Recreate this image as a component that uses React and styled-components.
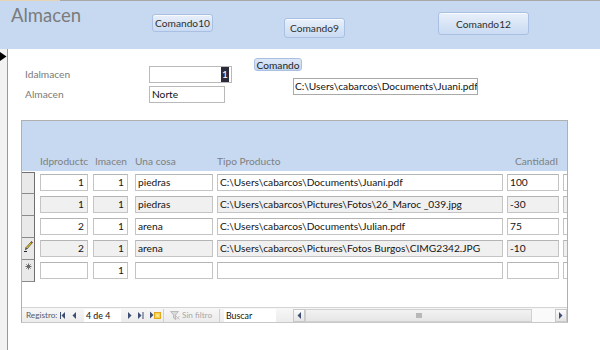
import React from "react";
import styled, { createGlobalStyle, css } from "styled-components";

const GlobalStyle = createGlobalStyle`
  html, body { margin: 0; padding: 0; background: #ffffff; }
  body { font-family: Lato, "Liberation Sans", sans-serif; }
  * { box-sizing: border-box; }
`;

const Screen = styled.div`
  width: 600px;
  height: 350px;
  overflow: hidden;
  display: flex;
  flex-direction: column;
  background: #ffffff;
  font-family: Lato, "Liberation Sans", sans-serif;
`;

const TopLine = styled.div`
  height: 1px;
  flex: none;
  background: linear-gradient(to right, #e6d3b3 0 60px, #a8a8a8 60px);
`;

const Header = styled.div`
  height: 48px;
  flex: none;
  display: flex;
  align-items: flex-start;
  background: #c6d9f1;
`;

const Title = styled.div`
  width: 141px;
  margin-left: 11px;
  margin-top: 3px;
  font-size: 18.5px;
  color: #7b7b7b;
  line-height: 22px;
`;

const CmdButton = styled.div`
  flex: none;
  width: ${(p) => p.$w}px;
  height: ${(p) => p.$h}px;
  margin-left: ${(p) => p.$ml || 0}px;
  margin-top: ${(p) => p.$mt || 0}px;
  display: flex;
  align-items: center;
  justify-content: center;
  border: 1px solid #a9c0e2;
  border-radius: 3px;
  background: linear-gradient(to bottom, #e9f0fa 0%, #d9e5f6 50%, #c9dbf3 100%);
  font-size: 10.2px;
  color: #2f2f2f;
  box-shadow: inset 0 1px 0 rgba(255, 255, 255, 0.7);
`;

const Body = styled.div`
  flex: 1;
  display: flex;
  min-height: 0;
`;

const FormSelector = styled.div`
  width: 8px;
  flex: none;
  background: #f2f2f2;
  border-right: 1px solid #9a9a9a;
  padding-top: 3px;
`;

const Detail = styled.div`
  flex: 1;
  display: flex;
  flex-direction: column;
`;

const FieldsArea = styled.div`
  height: 71px;
  flex: none;
  display: flex;
  align-items: flex-start;
`;

const LeftFields = styled.div`
  margin-left: 17px;
  margin-top: 17px;
  display: grid;
  grid-template-columns: 124px auto;
  row-gap: 3px;
  align-items: center;
`;

const FormLabel = styled.div`
  font-size: 10.2px;
  color: #7a7a7a;
  line-height: 17px;
`;

const FormBox = styled.div`
  width: ${(p) => p.$w}px;
  height: 17px;
  border: 1px solid #b9b9b9;
  background: #ffffff;
  font-size: 10.2px;
  color: #111;
  line-height: 15px;
  padding: 0 2px;
  display: flex;
  justify-content: ${(p) => (p.$right ? "flex-end" : "flex-start")};
  white-space: nowrap;
  overflow: hidden;
`;

const Selected = styled.span`
  background: #2b2b3a;
  color: #ffffff;
  padding: 0 1px;
  line-height: 14px;
`;

const RightGroup = styled.div`
  margin-left: 22px;
  margin-top: 9px;
  display: flex;
  flex-direction: column;
  align-items: flex-start;
`;

const SmallCmd = styled.div`
  height: 13px;
  width: 48px;
  border: 1px solid #a9c0e2;
  border-radius: 3px;
  background: linear-gradient(to bottom, #dde8f7, #c4d7f1);
  font-size: 10.2px;
  color: #1f1f1f;
  display: flex;
  align-items: center;
  justify-content: center;
`;

const PathBox = styled(FormBox)`
  margin-top: 7px;
  margin-left: 39px;
  border-color: #a9a9a9;
  padding: 0 1px;
`;

const Subform = styled.div`
  margin-left: 13px;
  width: 547px;
  height: 203px;
  flex: none;
  border: 1px solid #b0b0b0;
  border-bottom-color: #c8c8c8;
  display: flex;
  flex-direction: column;
  overflow: hidden;
`;

const SubHeader = styled.div`
  height: 50px;
  flex: none;
  background: #c6d9f1;
  display: flex;
  align-items: flex-end;
  padding-bottom: 3px;
`;

const SelectorSpace = styled.div`
  width: 13px;
  flex: none;
`;

const HeadLabel = styled.div`
  flex: none;
  width: ${(p) => p.$w}px;
  margin-left: ${(p) => p.$ml}px;
  font-size: 10.2px;
  color: #808080;
  line-height: 14px;
  white-space: nowrap;
  overflow: hidden;
  padding: 0 1px 0 0;
  text-align: ${(p) => (p.$right ? "right" : "left")};
`;

const Rows = styled.div`
  padding-top: 1px;
  display: flex;
  flex-direction: column;
`;

const Row = styled.div`
  height: 22px;
  display: flex;
  align-items: flex-start;
`;

const RowSelector = styled.div`
  width: 13px;
  height: 22px;
  flex: none;
  background: #e9e9e9;
  border-right: 1px solid #6f6f6f;
  border-bottom: 1px solid #8a8a8a;
  ${(p) =>
    p.$first &&
    css`
      border-top: 1px solid #6f6f6f;
    `}
  display: flex;
  align-items: flex-start;
  justify-content: center;
  padding-top: 3px;
`;

const Cell = styled.div`
  flex: none;
  width: ${(p) => p.$w}px;
  height: 17px;
  margin-top: 2px;
  margin-left: ${(p) => p.$ml}px;
  border: 1px solid #c4c4c4;
  border-top-color: #b4b4b4;
  background: ${(p) => (p.$alt ? "#f0f0f0" : "#ffffff")};
  font-size: 10.2px;
  color: #141414;
  line-height: 15px;
  padding: 0 3px 0 2px;
  white-space: nowrap;
  overflow: hidden;
  text-align: ${(p) => (p.$right ? "right" : "left")};
`;

const Spacer = styled.div`
  flex: 1;
`;

const NavBar = styled.div`
  height: 15px;
  flex: none;
  display: flex;
  align-items: center;
  background: linear-gradient(to bottom, #f7f7f7, #ececec);
  border-top: 1px solid #d4d4d4;
`;

const NavText = styled.span`
  flex: none;
  width: ${(p) => p.$w}px;
  margin-left: ${(p) => p.$ml || 0}px;
  color: ${(p) => (p.$dim ? "#a8a8a8" : "#555a66")};
  white-space: nowrap;
  font-size: 8.2px;
  line-height: 13px;
`;

const NavIcon = styled.svg`
  flex: none;
  margin-left: ${(p) => p.$ml || 0}px;
  display: block;
`;

const NavInput = styled.div`
  flex: none;
  width: ${(p) => p.$w}px;
  height: 13px;
  margin-left: ${(p) => p.$ml || 0}px;
  background: #ffffff;
  font-size: 8.8px;
  line-height: 13px;
  color: #111;
  padding-left: 2px;
  white-space: nowrap;
`;

const NavSep = styled.div`
  flex: none;
  width: 1px;
  height: 13px;
  margin-left: ${(p) => p.$ml || 0}px;
  background: #d0d0d0;
`;

const ScrollBtn = styled.div`
  flex: none;
  width: ${(p) => p.$w}px;
  height: 13px;
  margin-left: ${(p) => p.$ml || 0}px;
  border: 1px solid #c9c9c9;
  background: linear-gradient(to bottom, #fbfbfb, #e4e4e4);
  display: flex;
  align-items: center;
  justify-content: center;
`;

const Track = styled.div`
  flex: 1;
  height: 13px;
  border: 1px solid #d0d0d0;
  background: linear-gradient(to bottom, #f2f2f2, #e6e6e6);
  display: flex;
  align-items: center;
  justify-content: center;
`;

const Thumb = styled.div`
  width: 6px;
  height: 5px;
  background: #b8b8b8;
`;

const WhiteGap = styled.div`
  flex: none;
  width: 23px;
  height: 13px;
  background: #fafafa;
`;

const columns = [
  { key: "id", label: "Idproductc", w: 48, ml: 5, right: true },
  { key: "alm", label: "lmacen", w: 35, ml: 5, right: true, headRight: true },
  { key: "cosa", label: "Una cosa", w: 78, ml: 7 },
  { key: "tipo", label: "Tipo Producto", w: 286, ml: 4 },
  { key: "cant", label: "CantidadI", w: 52, ml: 4, headRight: true },
  { key: "x", label: "", w: 20, ml: 4 },
];

const data = [
  { id: "1", alm: "1", cosa: "piedras", tipo: "C:\\Users\\cabarcos\\Documents\\Juani.pdf", cant: "100", x: "" },
  { id: "1", alm: "1", cosa: "piedras", tipo: "C:\\Users\\cabarcos\\Pictures\\Fotos\\26_Maroc _039.jpg", cant: "-30", x: "" },
  { id: "2", alm: "1", cosa: "arena", tipo: "C:\\Users\\cabarcos\\Documents\\Julian.pdf", cant: "75", x: "" },
  { id: "2", alm: "1", cosa: "arena", tipo: "C:\\Users\\cabarcos\\Pictures\\Fotos Burgos\\CIMG2342.JPG", cant: "-10", x: "", edit: true },
  { id: "", alm: "1", cosa: "", tipo: "", cant: "", x: "", isNew: true },
];

const Pencil = () => (
  <svg width="9" height="11" viewBox="0 0 9 11">
    <path d="M7.5 0.5 L8.5 1.5 L3 8 L1.6 7 Z" fill="#f2d21a" stroke="#333" strokeWidth="0.7" />
    <path d="M7.2 0.8 L8.3 1.8" stroke="#c0392b" strokeWidth="1.2" />
    <path d="M1.6 7 L3 8 L1 9.2 Z" fill="#222" />
    <path d="M0 10.5 H3" stroke="#222" strokeWidth="1" />
  </svg>
);

const Star = () => (
  <svg width="7" height="7" viewBox="0 0 7 7">
    <g stroke="#6a6a6a" strokeWidth="1">
      <path d="M3.5 0.5 V6.5" />
      <path d="M0.5 3.5 H6.5" />
      <path d="M1.4 1.4 L5.6 5.6" />
      <path d="M5.6 1.4 L1.4 5.6" />
    </g>
  </svg>
);

const navColor = "#3e4f73";

export default function App() {
  return (
    <>
      <GlobalStyle />
      <Screen>
        <TopLine />
        <Header>
          <Title>Almacen</Title>
          <CmdButton $w={61} $h={18} $mt={13}>Comando10</CmdButton>
          <CmdButton $w={61} $h={20} $ml={71} $mt={17}>Comando9</CmdButton>
          <CmdButton $w={91} $h={23} $ml={93} $mt={11}>Comando12</CmdButton>
        </Header>
        <Body>
          <FormSelector>
            <svg width="7" height="9" viewBox="0 0 7 9" style={{ display: "block" }}>
              <path d="M0 0 L6.5 4.5 L0 9 Z" fill="#000" />
            </svg>
          </FormSelector>
          <Detail>
            <FieldsArea>
              <LeftFields>
                <FormLabel>Idalmacen</FormLabel>
                <FormBox $w={83} $right>
                  <Selected>1</Selected>
                </FormBox>
                <FormLabel>Almacen</FormLabel>
                <FormBox $w={76}>Norte</FormBox>
              </LeftFields>
              <RightGroup>
                <SmallCmd>Comando</SmallCmd>
                <PathBox $w={185}>C:\Users\cabarcos\Documents\Juani.pdf</PathBox>
              </RightGroup>
            </FieldsArea>
            <Subform>
              <SubHeader>
                <SelectorSpace />
                {columns.map((c) => (
                  <HeadLabel key={c.key} $w={c.w} $ml={c.ml} $right={c.headRight}>
                    {c.label}
                  </HeadLabel>
                ))}
              </SubHeader>
              <Rows>
                {data.map((r, i) => (
                  <Row key={i}>
                    <RowSelector $first={i === 0}>
                      {r.edit && <Pencil />}
                      {r.isNew && <Star />}
                    </RowSelector>
                    {columns.map((c) => (
                      <Cell key={c.key} $w={c.w} $ml={c.ml} $right={c.right} $alt={i % 2 === 1}>
                        {r[c.key]}
                      </Cell>
                    ))}
                  </Row>
                ))}
              </Rows>
              <Spacer />
              <NavBar>
                <NavText $w={34} $ml={4}>Registro:</NavText>
                <NavIcon width="5" height="7" viewBox="0 0 5 7">
                  <path d="M0.5 0 V7" stroke={navColor} strokeWidth="1" />
                  <path d="M5 0 L1.5 3.5 L5 7 Z" fill={navColor} />
                </NavIcon>
                <NavIcon $ml={7} width="4" height="7" viewBox="0 0 4 7">
                  <path d="M4 0 L0.5 3.5 L4 7 Z" fill={navColor} />
                </NavIcon>
                <NavInput $w={37} $ml={8}>4 de 4</NavInput>
                <NavIcon $ml={7} width="4" height="7" viewBox="0 0 4 7">
                  <path d="M0 0 L3.5 3.5 L0 7 Z" fill={navColor} />
                </NavIcon>
                <NavIcon $ml={6} width="6" height="7" viewBox="0 0 6 7">
                  <path d="M0 0 L3.5 3.5 L0 7 Z" fill={navColor} />
                  <path d="M5 0 V7" stroke={navColor} strokeWidth="1" />
                </NavIcon>
                <NavIcon $ml={6} width="11" height="8" viewBox="0 0 11 8">
                  <path d="M0 0.5 L3.5 4 L0 7.5 Z" fill={navColor} />
                  <rect x="4.5" y="1.5" width="6" height="6" fill="#f6d34a" stroke="#e0a820" strokeWidth="1" />
                  <rect x="6.5" y="3.5" width="2" height="2" fill="#fff6c8" />
                </NavIcon>
                <NavSep $ml={2} />
                <NavIcon $ml={6} width="10" height="9" viewBox="0 0 10 9">
                  <path d="M0.5 0.5 H8.5 L5.5 4 V8.5 L3.5 7 V4 Z" fill="#d9d9d9" stroke="#b0b0b0" strokeWidth="0.8" />
                  <path d="M6 5 L9.5 8.5 M9.5 5 L6 8.5" stroke="#c0c0c0" strokeWidth="1" />
                </NavIcon>
                <NavText $w={37} $ml={2} $dim>Sin filtro</NavText>
                <NavSep $ml={0} />
                <NavInput $w={52} $ml={4}>Buscar</NavInput>
                <ScrollBtn $w={12} $ml={17}>
                  <svg width="4" height="7" viewBox="0 0 4 7">
                    <path d="M4 0 L0.5 3.5 L4 7 Z" fill={navColor} />
                  </svg>
                </ScrollBtn>
                <Track>
                  <Thumb />
                </Track>
                <WhiteGap />
                <ScrollBtn $w={12}>
                  <svg width="4" height="7" viewBox="0 0 4 7">
                    <path d="M0 0 L3.5 3.5 L0 7 Z" fill={navColor} />
                  </svg>
                </ScrollBtn>
              </NavBar>
            </Subform>
          </Detail>
        </Body>
      </Screen>
    </>
  );
}
